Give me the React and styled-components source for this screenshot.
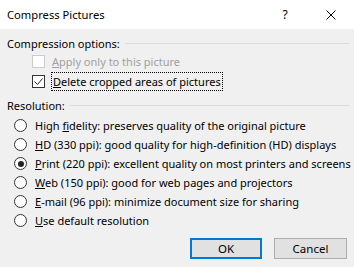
import React from "react";
import styled, { createGlobalStyle } from "styled-components";

const GlobalStyle = createGlobalStyle`
  html, body {
    margin: 0;
    padding: 0;
    background: #f0f0f0;
  }
  body {
    font-family: "Noto Sans", "Open Sans", sans-serif;
    font-size: 11px;
    color: #000;
  }
`;

const options = [
  { pre: "High ", acc: "f", post: "idelity: preserves quality of the original picture" },
  { pre: "", acc: "H", post: "D (330 ppi): good quality for high-definition (HD) displays" },
  { pre: "", acc: "P", post: "rint (220 ppi): excellent quality on most printers and screens", checked: true },
  { pre: "", acc: "W", post: "eb (150 ppi): good for web pages and projectors" },
  { pre: "", acc: "E", post: "-mail (96 ppi): minimize document size for sharing" },
  { pre: "", acc: "U", post: "se default resolution" },
];

const App = () => {
  return (
    <Dialog>
      <GlobalStyle />
      <TitleBar>
        <Title>Compress Pictures</Title>
        <TitleButtons>
          <Help>?</Help>
          <Close>
            <svg width="10" height="10" viewBox="0 0 10 10">
              <path d="M0.5 0.5 L9.5 9.5 M9.5 0.5 L0.5 9.5" stroke="#000" strokeWidth="1" />
            </svg>
          </Close>
        </TitleButtons>
      </TitleBar>
      <Body>
        <GroupHeader>
          <span>Compression options:</span>
          <Rule />
        </GroupHeader>
        <CheckRow disabled>
          <CheckBox disabled />
          <Label><u>A</u>pply only to this picture</Label>
        </CheckRow>
        <CheckRow>
          <CheckBox>
            <svg width="11" height="11" viewBox="0 0 11 11">
              <path d="M1.5 5.5 L4.5 8.5 L9.5 2.5" stroke="#222" strokeWidth="1" fill="none" />
            </svg>
          </CheckBox>
          <FocusLabel><u>D</u>elete cropped areas of pictures</FocusLabel>
        </CheckRow>
        <GroupHeader>
          <span>Resolution:</span>
          <Rule />
        </GroupHeader>
        <RadioList>
          {options.map((o, i) => (
            <RadioRow key={i}>
              <Radio>{o.checked && <Dot />}</Radio>
              <Label>
                {o.pre}<u>{o.acc}</u>{o.post}
              </Label>
            </RadioRow>
          ))}
        </RadioList>
        <Buttons>
          <Button $primary>OK</Button>
          <Button>Cancel</Button>
        </Buttons>
      </Body>
    </Dialog>
  );
};

//---------------------------------- STYLES ----------------------------------

const Dialog = styled.div`
  width: 354px;
  height: 267px;
  background: #f0f0f0;
  overflow: hidden;
`;

const TitleBar = styled.div`
  height: 29px;
  background: #fff;
  display: flex;
  align-items: center;
  justify-content: space-between;
  padding-left: 7px;
`;

const Title = styled.div`
  font-size: 11.2px;
`;

const TitleButtons = styled.div`
  display: flex;
  align-items: center;
`;

const Help = styled.div`
  width: 46px;
  text-align: center;
  font-size: 12px;
`;

const Close = styled.div`
  width: 46px;
  display: flex;
  justify-content: center;
  align-items: center;
`;

const Body = styled.div`
  padding: 0 4px 0 7px;
`;

const GroupHeader = styled.div`
  display: flex;
  align-items: center;
  height: 15px;
  margin-top: 7px;
  line-height: 15px;
`;

const Rule = styled.div`
  flex: 1;
  height: 1px;
  background: #dcdcdc;
  margin-left: 5px;
`;

const CheckRow = styled.div`
  display: flex;
  align-items: center;
  height: 20px;
  padding-left: 25px;
  color: ${p => (p.disabled ? "#a0a0a0" : "#000")};
`;

const CheckBox = styled.div`
  flex-shrink: 0;
  width: 11px;
  height: 11px;
  border: 1px solid ${p => (p.disabled ? "#cccccc" : "#333")};
  background: #fff;
  display: flex;
  align-items: center;
  justify-content: center;
  margin-right: 7px;
`;

const Label = styled.span`
  line-height: 15px;
  white-space: nowrap;
`;

const FocusLabel = styled(Label)`
  outline: 1px dotted #000;
  padding: 1px 1px;
`;

const RadioList = styled.div`
  margin-top: 3px;
`;

const RadioRow = styled.div`
  display: flex;
  align-items: center;
  height: 19px;
  padding-left: 7px;
`;

const Radio = styled.div`
  flex-shrink: 0;
  width: 11px;
  height: 11px;
  border: 1px solid #333;
  border-radius: 50%;
  background: #fff;
  display: flex;
  align-items: center;
  justify-content: center;
  margin-right: 8px;
`;

const Dot = styled.div`
  width: 6px;
  height: 6px;
  border-radius: 50%;
  background: #222;
`;

const Buttons = styled.div`
  display: flex;
  justify-content: flex-end;
  gap: 12px;
  margin-top: 8px;
  padding-right: 3px;
`;

const Button = styled.div`
  box-sizing: border-box;
  width: ${p => (p.$primary ? "72px" : "73px")};
  height: 21px;
  background: #e1e1e1;
  border: ${p => (p.$primary ? "2px solid #0078d7" : "1px solid #adadad")};
  display: flex;
  align-items: center;
  justify-content: center;
  font-size: 11.5px;
`;

export default App;
